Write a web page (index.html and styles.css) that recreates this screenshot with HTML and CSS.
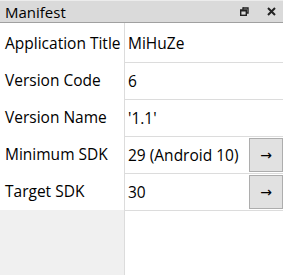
FILE: index.html
```html
<!DOCTYPE html>
<html lang="en">
<head>
    <meta charset="UTF-8">
    <title>Manifest</title>
    <link rel="stylesheet" href="styles.css">
</head>
<body>
    <div class="panel">
        <div class="titlebar">
            <span class="title">Manifest</span>
            <span class="tools">
                <svg class="icon" width="9" height="9" viewBox="0 0 9 9">
                    <path d="M3 1h5v5h-2" fill="none" stroke="#222" stroke-width="1.4"/>
                    <path d="M3 0.3v2.5" fill="none" stroke="#222" stroke-width="1.4"/>
                    <rect x="0.7" y="3.2" width="5.6" height="5.1" fill="none" stroke="#222" stroke-width="1.4"/>
                    <rect x="0" y="2.5" width="7" height="2" fill="#222"/>
                </svg>
                <svg class="icon" width="9" height="9" viewBox="0 0 9 9">
                    <path d="M1 1l7 7M8 1l-7 7" stroke="#222" stroke-width="2"/>
                </svg>
            </span>
        </div>
        <div class="grid">
            <div class="labels">
                <div class="label">Application Title</div>
                <div class="label">Version Code</div>
                <div class="label">Version Name</div>
                <div class="label">Minimum SDK</div>
                <div class="label">Target SDK</div>
            </div>
            <div class="values">
                <div class="value">MiHuZe</div>
                <div class="value">6</div>
                <div class="value">'1.1'</div>
                <div class="value">
                    <span class="text">29 (Android 10)</span>
                    <button class="go">&rarr;</button>
                </div>
                <div class="value">
                    <span class="text">30</span>
                    <button class="go">&rarr;</button>
                </div>
            </div>
        </div>
    </div>
</body>
</html>
```

FILE: styles.css
```css
body {
    margin: 0;
    font-family: "Open Sans", "Noto Sans", sans-serif;
    font-size: 15.5px;
    color: #000;
    background: #fff;
}
.panel {
    width: 283px;
    height: 275px;
    display: flex;
    flex-direction: column;
    overflow: hidden;
}
.titlebar {
    height: 21px;
    background-color: #dadada;
    border-top: 1px solid #ececec;
    border-bottom: 1px solid #a0a0a0;
    display: flex;
    align-items: center;
    justify-content: space-between;
    padding: 0 7px 0 5px;
}
.title {
    font-size: 15px;
}
.tools {
    display: flex;
    gap: 18px;
    align-items: center;
}
.icon {
    display: block;
}
.grid {
    flex: 1;
    display: flex;
}
.labels {
    width: 124px;
    background-color: #f0f0f0;
}
.label {
    height: 37px;
    line-height: 37px;
    padding-left: 5px;
    background-color: #fff;
    white-space: nowrap;
}
.label:first-child {
    height: 39px;
    line-height: 41px;
}
.values {
    flex: 1;
    border-left: 1px solid #dcdcdc;
}
.value {
    height: 36px;
    border-bottom: 1px solid #dcdcdc;
    display: flex;
    align-items: center;
    justify-content: space-between;
    padding-left: 3px;
    white-space: nowrap;
}
.value:first-child {
    height: 38px;
    padding-top: 1px;
}
.go {
    width: 34px;
    height: 34px;
    margin: 0;
    padding: 0;
    background-color: #e1e1e1;
    border: 1px solid #adadad;
    font-family: "DejaVu Sans", sans-serif;
    font-size: 14px;
    color: #000;
}
```
